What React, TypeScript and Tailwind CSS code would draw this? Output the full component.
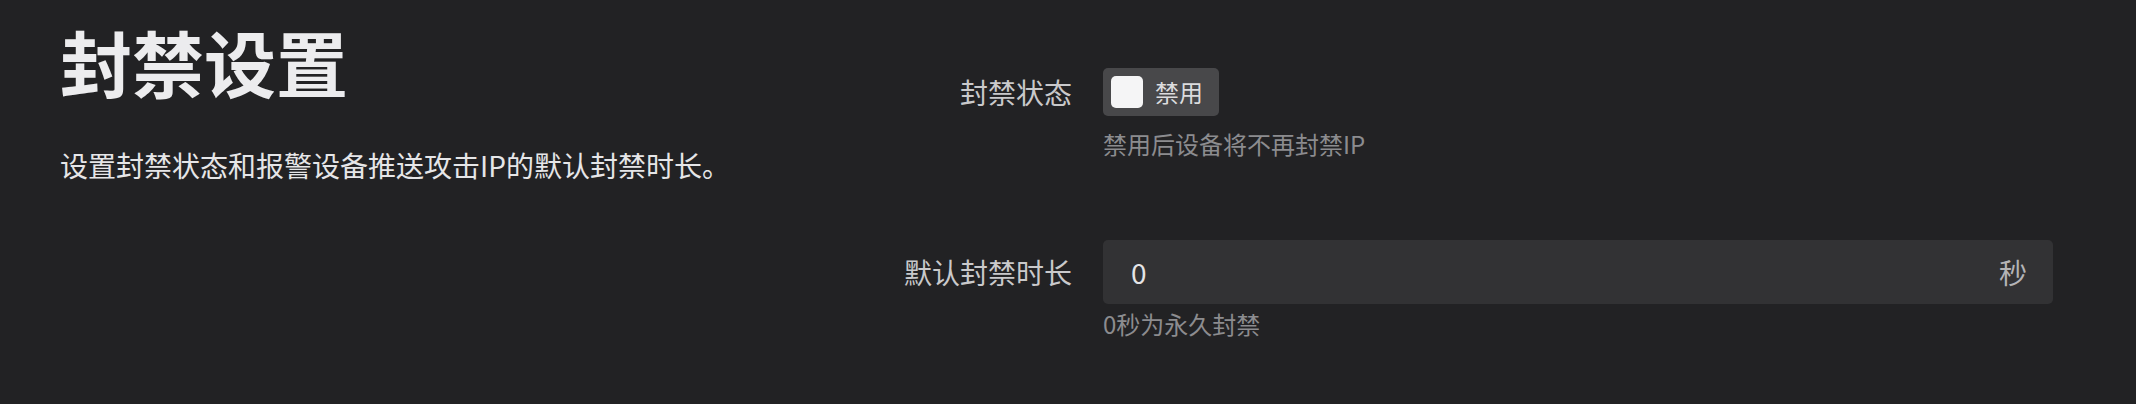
import React, { useState } from 'react';

const FONT = "font-['Noto_Sans_CJK_SC','Noto_Sans',sans-serif]";

export default function App() {
  const [enabled, setEnabled] = useState(false);
  const [seconds, setSeconds] = useState('0');

  return (
    <div className={`min-h-[404px] w-full bg-[#222224] ${FONT} flex px-[60px] pt-[25px]`}>
      {/* Section intro */}
      <div className="w-[820px] shrink-0">
        <h1 className="text-[72px] leading-none font-semibold text-[#ececee]">封禁设置</h1>
        <p className="mt-[54px] text-[28px] leading-[28px] text-[#e6e6e8]">
          设置封禁状态和报警设备推送攻击IP的默认封禁时长。
        </p>
      </div>

      {/* Form */}
      <div className="flex-1 pr-[23px] pt-[35px] flex flex-col gap-[80px]">
        <div className="grid grid-cols-[192px_1fr] gap-x-[31px]">
          <label className="h-[64px] flex items-center justify-end text-[28px] text-[#c9c9cb]">封禁状态</label>
          <div className="h-[64px] flex items-center">
            <button
              onClick={() => setEnabled(!enabled)}
              className="h-[48px] flex items-center gap-[12px] pl-[8px] pr-[16px] rounded-[5px] bg-[#48484a]"
            >
              <span className="w-[32px] h-[32px] rounded-[5px] bg-[#f5f5f6]" />
              <span className="text-[24px] leading-none text-[#dcdcde]">{enabled ? '启用' : '禁用'}</span>
            </button>
          </div>
          <div />
          <p className="mt-[4px] text-[24px] leading-[32px] text-[#8c8c8f]">禁用后设备将不再封禁IP</p>
        </div>

        <div className="grid grid-cols-[192px_1fr] gap-x-[31px]">
          <label className="h-[64px] flex items-center justify-end text-[28px] text-[#c9c9cb]">默认封禁时长</label>
          <div className="h-[64px] flex items-center rounded-[5px] bg-[#323234] pl-[28px] pr-[26px]">
            <input
              value={seconds}
              onChange={(e) => setSeconds(e.target.value)}
              className="flex-1 bg-transparent outline-none text-[28px] text-[#e4e4e6]"
            />
            <span className="text-[28px] text-[#b4b4b6]">秒</span>
          </div>
          <div />
          <p className="mt-[4px] text-[24px] leading-[32px] text-[#8c8c8f]">0秒为永久封禁</p>
        </div>
      </div>
    </div>
  );
}
